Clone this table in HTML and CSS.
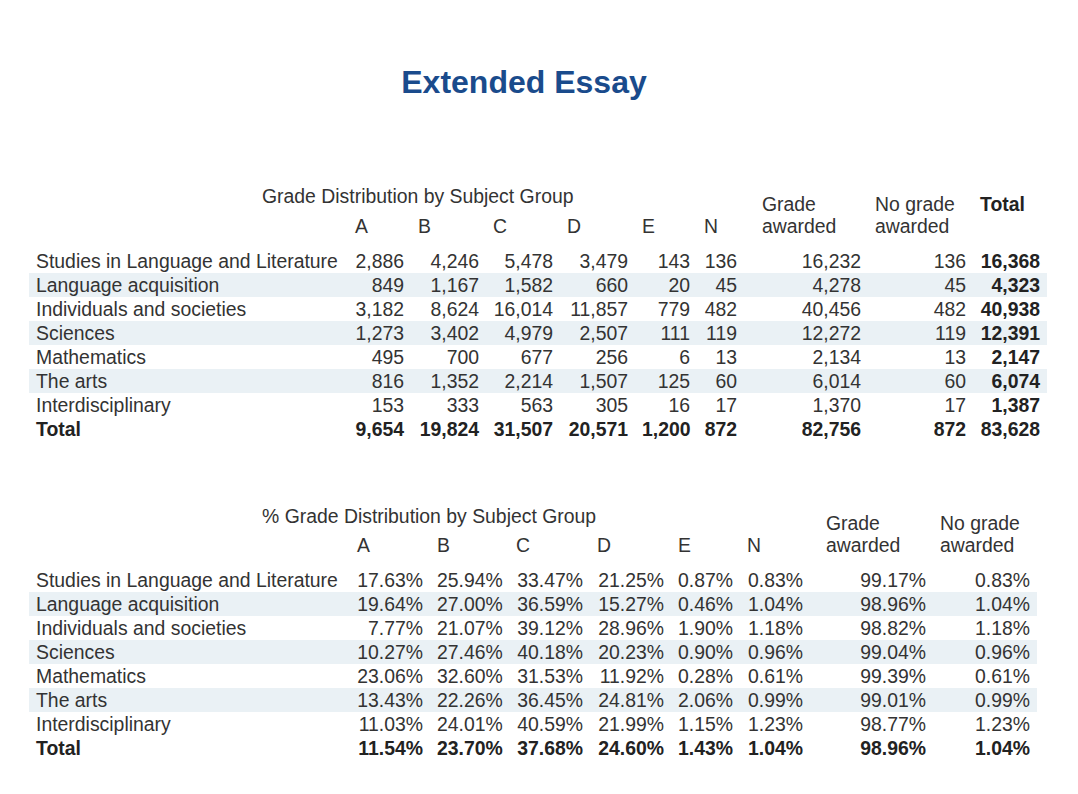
FILE: index.html
```html
<!DOCTYPE html>
<html lang="en">
<head>
<meta charset="utf-8">
<title>Extended Essay</title>
<link rel="stylesheet" href="styles.css">
</head>
<body>
<main class="page">
  <h1 class="page-title">Extended Essay</h1>

  <table class="dist dist-counts">
    <colgroup>
      <col class="c-label1"><col class="c-a1"><col class="c-b1"><col class="c-c1"><col class="c-d1"><col class="c-e1"><col class="c-n1"><col class="c-g1"><col class="c-ng1"><col class="c-t1">
    </colgroup>
    <thead>
      <tr class="row-title">
        <th colspan="7" class="group-title">Grade Distribution by Subject Group</th>
        <th rowspan="2" class="col-head wide">Grade<br>awarded</th>
        <th rowspan="2" class="col-head">No grade<br>awarded</th>
        <th rowspan="2" class="col-head strong">Total</th>
      </tr>
      <tr class="row-letters">
        <th></th><th>A</th><th>B</th><th>C</th><th>D</th><th>E</th><th>N</th>
      </tr>
    </thead>
    <tbody>
      <tr><td>Studies in Language and Literature</td><td>2,886</td><td>4,246</td><td>5,478</td><td>3,479</td><td>143</td><td>136</td><td class="wide">16,232</td><td>136</td><td class="strong">16,368</td></tr>
      <tr class="stripe"><td>Language acquisition</td><td>849</td><td>1,167</td><td>1,582</td><td>660</td><td>20</td><td>45</td><td class="wide">4,278</td><td>45</td><td class="strong">4,323</td></tr>
      <tr><td>Individuals and societies</td><td>3,182</td><td>8,624</td><td>16,014</td><td>11,857</td><td>779</td><td>482</td><td class="wide">40,456</td><td>482</td><td class="strong">40,938</td></tr>
      <tr class="stripe"><td>Sciences</td><td>1,273</td><td>3,402</td><td>4,979</td><td>2,507</td><td>111</td><td>119</td><td class="wide">12,272</td><td>119</td><td class="strong">12,391</td></tr>
      <tr><td>Mathematics</td><td>495</td><td>700</td><td>677</td><td>256</td><td>6</td><td>13</td><td class="wide">2,134</td><td>13</td><td class="strong">2,147</td></tr>
      <tr class="stripe"><td>The arts</td><td>816</td><td>1,352</td><td>2,214</td><td>1,507</td><td>125</td><td>60</td><td class="wide">6,014</td><td>60</td><td class="strong">6,074</td></tr>
      <tr><td>Interdisciplinary</td><td>153</td><td>333</td><td>563</td><td>305</td><td>16</td><td>17</td><td class="wide">1,370</td><td>17</td><td class="strong">1,387</td></tr>
      <tr class="total"><td>Total</td><td>9,654</td><td>19,824</td><td>31,507</td><td>20,571</td><td>1,200</td><td>872</td><td class="wide">82,756</td><td>872</td><td>83,628</td></tr>
    </tbody>
  </table>

  <table class="dist dist-pct">
    <colgroup>
      <col class="c-label2"><col class="c-a2"><col class="c-b2"><col class="c-c2"><col class="c-d2"><col class="c-e2"><col class="c-n2"><col class="c-g2"><col class="c-ng2">
    </colgroup>
    <thead>
      <tr class="row-title">
        <th colspan="7" class="group-title">% Grade Distribution by Subject Group</th>
        <th rowspan="2" class="col-head wide2">Grade<br>awarded</th>
        <th rowspan="2" class="col-head">No grade<br>awarded</th>
      </tr>
      <tr class="row-letters">
        <th></th><th>A</th><th>B</th><th>C</th><th>D</th><th>E</th><th>N</th>
      </tr>
    </thead>
    <tbody>
      <tr><td>Studies in Language and Literature</td><td>17.63%</td><td>25.94%</td><td>33.47%</td><td>21.25%</td><td>0.87%</td><td>0.83%</td><td class="wide2">99.17%</td><td>0.83%</td></tr>
      <tr class="stripe"><td>Language acquisition</td><td>19.64%</td><td>27.00%</td><td>36.59%</td><td>15.27%</td><td>0.46%</td><td>1.04%</td><td class="wide2">98.96%</td><td>1.04%</td></tr>
      <tr><td>Individuals and societies</td><td>7.77%</td><td>21.07%</td><td>39.12%</td><td>28.96%</td><td>1.90%</td><td>1.18%</td><td class="wide2">98.82%</td><td>1.18%</td></tr>
      <tr class="stripe"><td>Sciences</td><td>10.27%</td><td>27.46%</td><td>40.18%</td><td>20.23%</td><td>0.90%</td><td>0.96%</td><td class="wide2">99.04%</td><td>0.96%</td></tr>
      <tr><td>Mathematics</td><td>23.06%</td><td>32.60%</td><td>31.53%</td><td>11.92%</td><td>0.28%</td><td>0.61%</td><td class="wide2">99.39%</td><td>0.61%</td></tr>
      <tr class="stripe"><td>The arts</td><td>13.43%</td><td>22.26%</td><td>36.45%</td><td>24.81%</td><td>2.06%</td><td>0.99%</td><td class="wide2">99.01%</td><td>0.99%</td></tr>
      <tr><td>Interdisciplinary</td><td>11.03%</td><td>24.01%</td><td>40.59%</td><td>21.99%</td><td>1.15%</td><td>1.23%</td><td class="wide2">98.77%</td><td>1.23%</td></tr>
      <tr class="total"><td>Total</td><td>11.54%</td><td>23.70%</td><td>37.68%</td><td>24.60%</td><td>1.43%</td><td>1.04%</td><td class="wide2">98.96%</td><td>1.04%</td></tr>
    </tbody>
  </table>
</main>
</body>
</html>
```

FILE: styles.css
```css
html, body {
  margin: 0;
  padding: 0;
  background: #ffffff;
}

body {
  font-family: "Liberation Sans", Arial, sans-serif;
  color: #333333;
}

.page {
  padding: 64px 0 0 29px;
}

.page-title {
  margin: 0 0 85px 0;
  padding-right: 59px;
  font-size: 32px;
  line-height: 36px;
  font-weight: bold;
  color: #1a4b8c;
  text-align: center;
}

.dist {
  border-collapse: collapse;
  table-layout: fixed;
  font-size: 19.4px;
  line-height: 22px;
}

.dist-counts {
  width: 1018px;
  margin-bottom: 64px;
}

.dist-pct {
  width: 1008px;
}

/* column widths: counts table */
.c-label1 { width: 319px; }
.c-a1 { width: 63px; }
.c-b1 { width: 75px; }
.c-c1 { width: 74px; }
.c-d1 { width: 75px; }
.c-e1 { width: 62px; }
.c-n1 { width: 47px; }
.c-g1 { width: 124px; }
.c-ng1 { width: 105px; }
.c-t1 { width: 74px; }

/* column widths: percentage table */
.c-label2 { width: 321px; }
.c-a2 { width: 80px; }
.c-b2 { width: 79px; }
.c-c2 { width: 81px; }
.c-d2 { width: 81px; }
.c-e2 { width: 69px; }
.c-n2 { width: 70px; }
.c-g2 { width: 123px; }
.c-ng2 { width: 104px; }

.dist th {
  font-weight: normal;
  text-align: left;
  padding: 0 7px;
  white-space: nowrap;
}

.dist td {
  padding: 1px 7px;
  text-align: right;
  white-space: nowrap;
}

.dist td:first-child {
  text-align: left;
}

.row-title {
  height: 30px;
}

.group-title {
  vertical-align: top;
}

.dist th.group-title {
  padding-left: 233px;
}

.col-head {
  vertical-align: top;
}

.dist-counts .col-head {
  padding-top: 8px;
}

.dist-pct .col-head {
  padding-top: 7px;
}

.dist-pct .row-title {
  height: 29px;
}

.dist th.wide,
.dist td.wide {
  padding-left: 18px;
}

.dist th.wide2,
.dist td.wide2 {
  padding-left: 16px;
}

.strong {
  font-weight: bold;
}

.dist th.strong {
  font-weight: bold;
  color: #222222;
}

.dist tbody tr:first-child td {
  padding-top: 13px;
}

.dist tr.stripe td {
  background: #eaf1f5;
}

.dist tr.total td {
  font-weight: bold;
  color: #222222;
}

.dist td.strong {
  color: #222222;
}
```
